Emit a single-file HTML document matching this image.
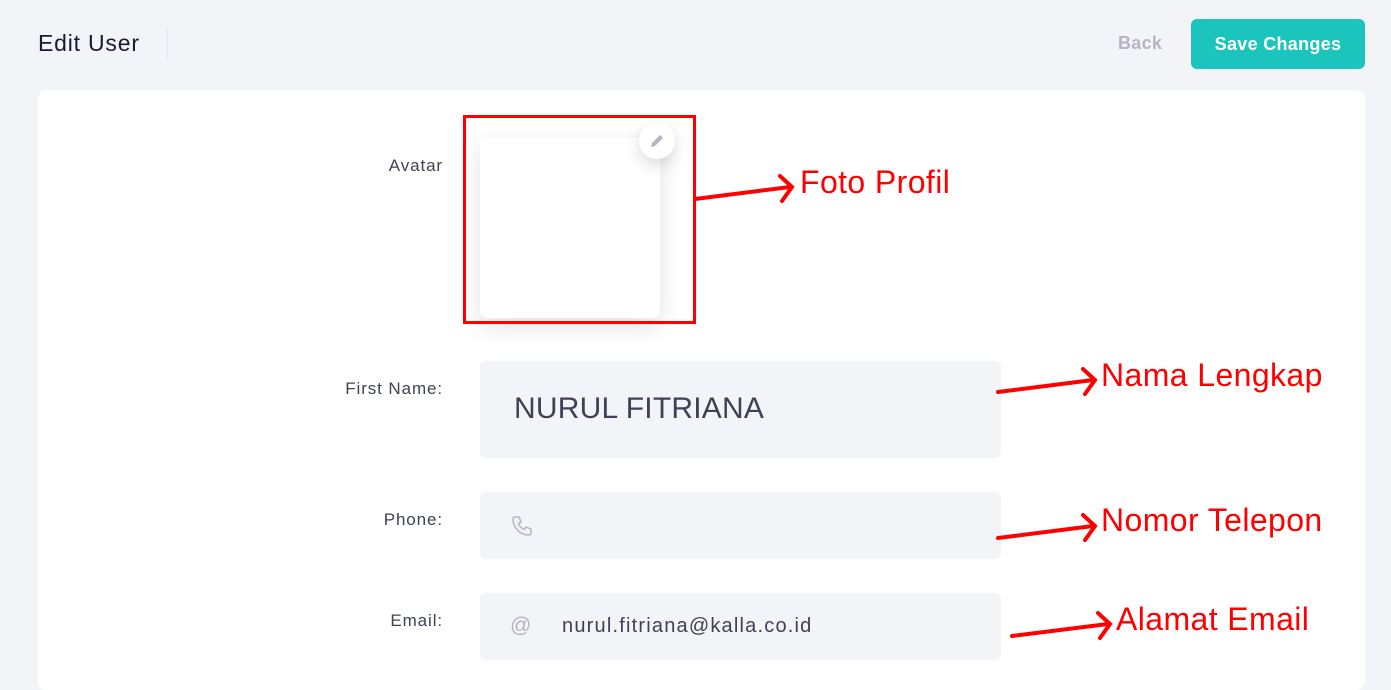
<!DOCTYPE html>
<html><head><meta charset="utf-8"><style>
*{margin:0;padding:0;box-sizing:border-box}
body{width:1391px;height:675px;background:#f2f4f8;font-family:"Liberation Sans",sans-serif;position:relative;overflow:hidden}
.abs{position:absolute}
.title{left:38px;top:30px;font-size:23px;color:#181c32;letter-spacing:0.8px}
.sep{left:167px;top:27px;width:1px;height:33px;background:#e4e6ef}
.back{left:1118px;top:33px;font-size:18px;color:#b5b5c3;font-weight:bold;letter-spacing:0.3px}
.btn{left:1191px;top:19px;width:174px;height:50px;background:#1bc5bd;border-radius:6px;color:#fff;font-size:18px;font-weight:bold;text-align:center;line-height:50px;letter-spacing:0.3px}
.card{left:38px;top:90px;width:1327px;height:600px;background:#fff;border-radius:8px}
.lbl{font-size:17px;color:#3f4254;text-align:right;width:220px;left:223px;letter-spacing:0.9px}
.inp{left:480px;width:521px;background:#f2f4f8;border-radius:6px}
.red{color:#ff0000;font-size:32px;letter-spacing:0.4px}
</style></head><body>
<div class="abs title">Edit User</div>
<div class="abs sep"></div>
<div class="abs back">Back</div>
<div class="abs btn">Save Changes</div>
<div class="abs card"></div>
<div class="abs lbl" style="top:156px">Avatar</div>
<div class="abs" style="left:480px;top:138px;width:180px;height:180px;background:#fff;border-radius:8px;box-shadow:0 8px 24px rgba(0,0,0,0.12)"></div>
<div class="abs" style="left:639px;top:123px;width:36px;height:36px;border-radius:50%;background:#fff;box-shadow:0 6px 16px rgba(0,0,0,0.15)">
<svg width="36" height="36" viewBox="0 0 36 36"><path d="M12 24 L13 20 L21 12 L24 15 L16 23 Z" fill="#b5b5c3"/></svg></div>
<div class="abs" style="left:463px;top:115px;width:233px;height:209px;border:3px solid #f00"></div>
<div class="abs lbl" style="top:379px">First Name:</div>
<div class="abs inp" style="top:361px;height:97px"></div>
<div class="abs" style="left:514px;top:392px;font-size:30px;color:#3f4254;letter-spacing:0.2px">NURUL FITRIANA</div>
<div class="abs lbl" style="top:510px">Phone:</div>
<div class="abs inp" style="top:492px;height:67px"></div>
<svg class="abs" style="left:510px;top:514px" width="24" height="24" viewBox="0 0 24 24"><path d="M5 3 L9 3 L11 8 L8.5 10 A11 11 0 0 0 14 15.5 L16 13 L21 15 L21 19 A2 2 0 0 1 19 21 A16 16 0 0 1 3 5 A2 2 0 0 1 5 3 Z" fill="none" stroke="#b5b5c3" stroke-width="1.5"/></svg>
<div class="abs lbl" style="top:611px">Email:</div>
<div class="abs inp" style="top:593px;height:67px"></div>
<div class="abs" style="left:510px;top:614px;font-size:21px;color:#b5b5c3">@</div>
<div class="abs" style="left:562px;top:615px;font-size:20px;color:#3f4254;letter-spacing:1.2px">nurul.fitriana@kalla.co.id</div>
<svg class="abs" style="left:0;top:0" width="1391" height="675">
<g stroke="#f00" stroke-width="4" fill="none" stroke-linecap="round">
<path d="M695 199 L790 187 M780 176 L792 187 L782 201"/>
<path d="M998 392 L1093 380 M1083 369 L1095 380 L1085 394"/>
<path d="M998 538 L1093 526 M1083 515 L1095 526 L1085 540"/>
<path d="M1012 636 L1108 624 M1098 613 L1110 624 L1100 638"/>
</g></svg>
<div class="abs red" style="left:800px;top:164px">Foto Profil</div>
<div class="abs red" style="left:1101px;top:357px">Nama Lengkap</div>
<div class="abs red" style="left:1101px;top:502px">Nomor Telepon</div>
<div class="abs red" style="left:1116px;top:601px">Alamat Email</div>
</body></html>
